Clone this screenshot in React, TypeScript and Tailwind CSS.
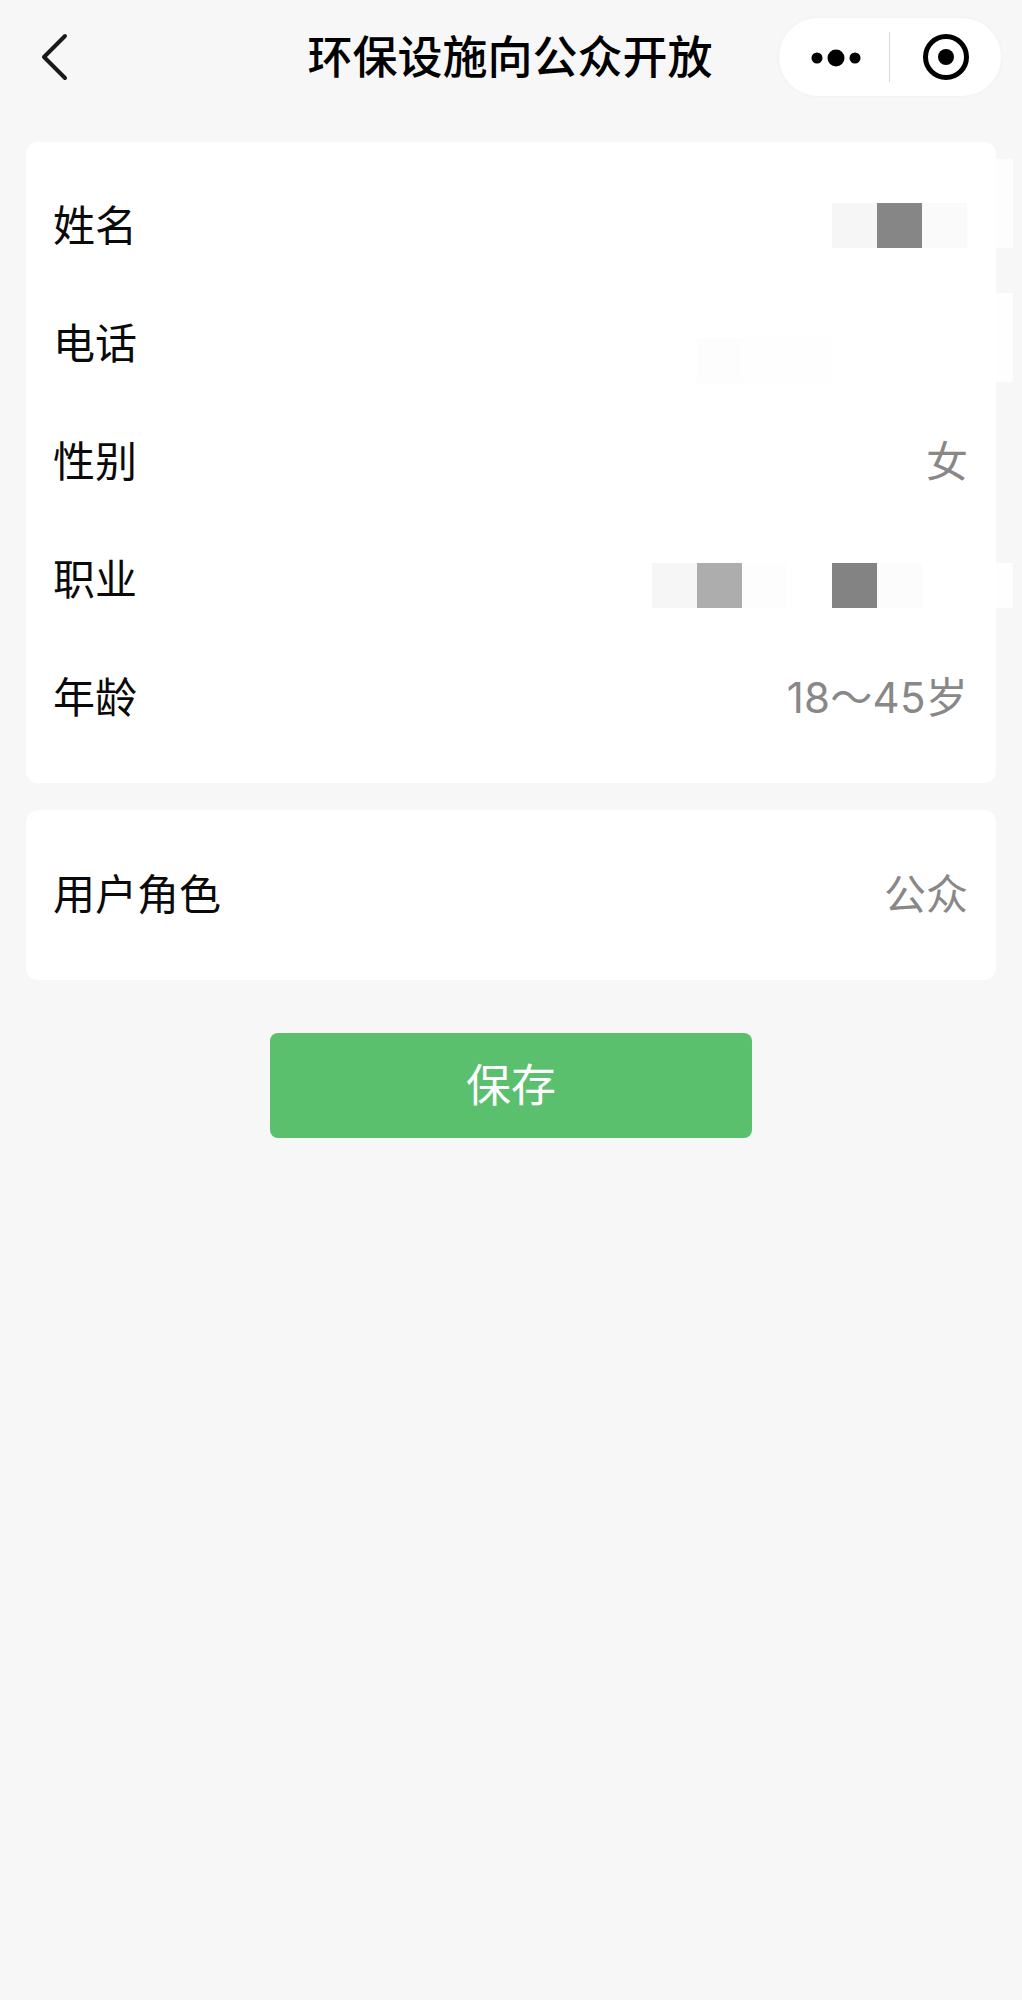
import React from 'react';

const Row = ({ label, children }: { label: string; children?: React.ReactNode }) => (
  <div className="flex h-[118px] items-center justify-between pl-[27px] pr-[28px]">
    <span className="text-[42px] leading-none text-[#0a0a0a]">{label}</span>
    {children}
  </div>
);

const Value = ({ text }: { text: string }) => (
  <span className="text-[42px] leading-none text-[#888]">{text}</span>
);

// 打码的马赛克块
const Cell = ({ className = '' }: { className?: string }) => <div className={`h-[45px] w-[45px] ${className}`} />;

export default function App() {
  return (
    <div className="h-[2000px] w-[1022px] bg-[#f7f7f7] font-['Inter','Noto_Sans_CJK_SC',sans-serif]">
      {/* Nav bar */}
      <div className="grid h-[114px] grid-cols-[1fr_auto_1fr] items-center">
        <div className="pl-[41px]">
          <svg width="30" height="50" viewBox="0 0 30 50" fill="none" stroke="#1a1a1a" strokeWidth="4" strokeLinecap="round" strokeLinejoin="round">
            <path d="M24 4 3 25l21 21" />
          </svg>
        </div>
        <h1 className="mr-[2px] text-[45px] font-medium leading-none text-black">环保设施向公众开放</h1>
        <div className="flex justify-end pr-[20px]">
          <div className="flex h-[80px] w-[224px] items-center rounded-[40px] border border-[#f4f4f4] bg-white shadow-[0_0_3px_#f2f2f2]">
            <div className="w-[110px] pl-[24px]">
              <svg width="66" height="20" viewBox="0 0 66 20" fill="#000" className="block">
                <circle cx="14" cy="11" r="5.5" />
                <circle cx="33" cy="11" r="8.5" />
                <circle cx="52" cy="11" r="5.5" />
              </svg>
            </div>
            <div className="h-[50px] w-px bg-[#d8d8d8]" />
            <div className="flex flex-1 justify-center">
              <svg width="50" height="50" viewBox="0 0 50 50" className="block">
                <circle cx="25" cy="25" r="20.5" fill="none" stroke="#000" strokeWidth="5" />
                <circle cx="25" cy="25" r="8" fill="#000" />
              </svg>
            </div>
          </div>
        </div>
      </div>

      {/* Info */}
      <div className="relative mx-[26px] mt-[28px] h-[641px] rounded-[12px] bg-white pt-[25px]">
        <div className="absolute left-full top-[17px] h-[89px] w-[17px] bg-[#fdfdfd]" />
        <div className="absolute left-full top-[151px] h-[89px] w-[17px] bg-[#fefefe]" />
        <div className="absolute left-full top-[421px] h-[45px] w-[17px] bg-[#fefefe]" />
        <Row label="姓名">
          <div className="mb-[2px] mr-[1px] flex">
            <Cell className="bg-[#f6f6f6]" />
            <Cell className="bg-[#868686]" />
            <Cell className="bg-[#fafafa]" />
          </div>
        </Row>
        <Row label="电话">
          <div className="mr-[1px] mt-[32px] flex">
            <Cell className="bg-[#fdfdfd]" />
            <Cell className="bg-[#fefefe]" />
            <Cell className="bg-[#fefefe]" />
            <Cell className="bg-white" />
            <Cell className="bg-white" />
            <Cell className="bg-white" />
          </div>
        </Row>
        <Row label="性别">
          <Value text="女" />
        </Row>
        <Row label="职业">
          <div className="mr-[1px] mt-[10px] flex">
            <Cell className="bg-[#f6f6f6]" />
            <Cell className="bg-[#adadad]" />
            <Cell className="bg-[#fdfdfd]" />
            <Cell className="bg-white" />
            <Cell className="bg-[#838383]" />
            <Cell className="bg-[#fcfcfc]" />
            <Cell className="bg-white" />
          </div>
        </Row>
        <Row label="年龄">
          <span className="text-[42px] leading-none tracking-[0.25px] text-[#888]">18～45岁</span>
        </Row>
      </div>

      <div className="mx-[26px] mt-[27px] flex h-[170px] flex-col justify-center rounded-[12px] bg-white">
        <Row label="用户角色">
          <Value text="公众" />
        </Row>
      </div>

      <button className="mx-auto mt-[53px] flex h-[105px] w-[482px] items-center justify-center rounded-[8px] bg-[#5ac06d] text-[45px] leading-none text-white">
        保存
      </button>
    </div>
  );
}
